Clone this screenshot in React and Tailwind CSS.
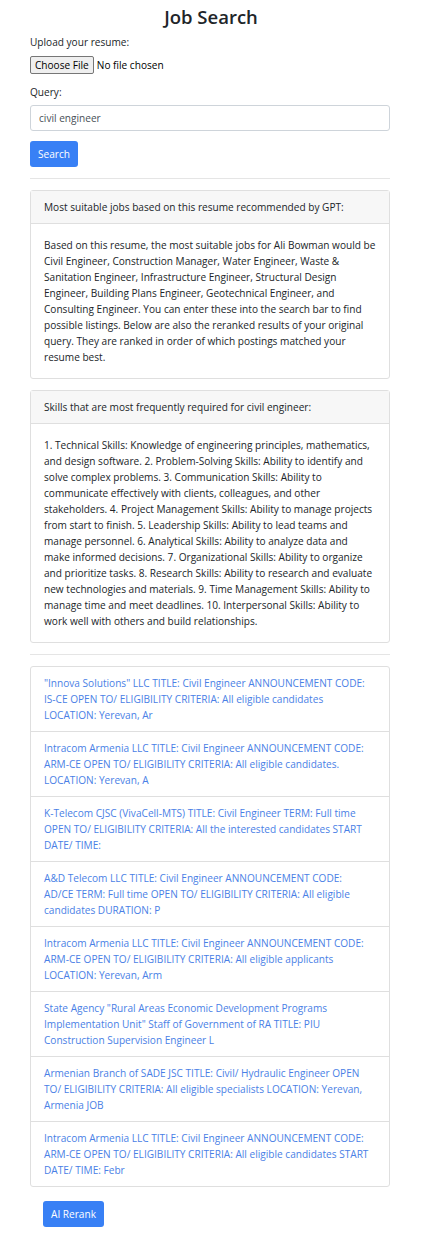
import React from 'react';

const JOBS = [
  '"Innova Solutions" LLC TITLE: Civil Engineer ANNOUNCEMENT CODE: IS-CE OPEN TO/ ELIGIBILITY CRITERIA: All eligible candidates LOCATION: Yerevan, Ar',
  'Intracom Armenia LLC TITLE: Civil Engineer ANNOUNCEMENT CODE: ARM-CE OPEN TO/ ELIGIBILITY CRITERIA: All eligible candidates. LOCATION: Yerevan, A',
  'K-Telecom CJSC (VivaCell-MTS) TITLE: Civil Engineer TERM: Full time OPEN TO/ ELIGIBILITY CRITERIA: All the interested candidates START DATE/ TIME:',
  'A&D Telecom LLC TITLE: Civil Engineer ANNOUNCEMENT CODE:\nAD/CE TERM: Full time OPEN TO/ ELIGIBILITY CRITERIA: All eligible candidates DURATION: P',
  'Intracom Armenia LLC TITLE: Civil Engineer ANNOUNCEMENT CODE: ARM-CE OPEN TO/ ELIGIBILITY CRITERIA: All eligible applicants LOCATION: Yerevan, Arm',
  'State Agency "Rural Areas Economic Development Programs Implementation Unit" Staff of Government of RA TITLE: PIU Construction Supervision Engineer L',
  'Armenian Branch of SADE JSC TITLE: Civil/ Hydraulic Engineer OPEN TO/ ELIGIBILITY CRITERIA: All eligible specialists LOCATION: Yerevan, Armenia JOB',
  'Intracom Armenia LLC TITLE: Civil Engineer ANNOUNCEMENT CODE: ARM-CE OPEN TO/ ELIGIBILITY CRITERIA: All eligible candidates START DATE/ TIME: Febr',
];

const RECOMMEND =
  'Based on this resume, the most suitable jobs for Ali Bowman would be Civil Engineer, Construction Manager, Water Engineer, Waste & Sanitation Engineer, Infrastructure Engineer, Structural Design Engineer, Building Plans Engineer, Geotechnical Engineer, and Consulting Engineer. You can enter these into the search bar to find possible listings. Below are also the reranked results of your original query. They are ranked in order of which postings matched your resume best.';

const SKILLS =
  '1. Technical Skills: Knowledge of engineering principles, mathematics, and design software. 2. Problem-Solving Skills: Ability to identify and solve complex problems. 3. Communication Skills: Ability to communicate effectively with clients, colleagues, and other stakeholders. 4. Project Management Skills: Ability to manage projects from start to finish. 5. Leadership Skills: Ability to lead teams and manage personnel. 6. Analytical Skills: Ability to analyze data and make informed decisions. 7. Organizational Skills: Ability to organize and prioritize tasks. 8. Research Skills: Ability to research and evaluate new technologies and materials. 9. Time Management Skills: Ability to manage time and meet deadlines. 10. Interpersonal Skills: Ability to work well with others and build relationships.';

const InfoCard = ({ title, children }) => (
  <div className="rounded-[3px] border border-[#dfdfdf] bg-white">
    <div className="h-[33px] flex items-center px-[13px] bg-[#f7f7f7] border-b border-[#dfdfdf]">{title}</div>
    <div className="px-[13px] pt-[13px] pb-[13px]">{children}</div>
  </div>
);

export default function App() {
  return (
    <div className="min-h-[1243px] bg-white text-[#212529] text-[10.1px] leading-[16px] font-['Open_Sans','Noto_Sans',sans-serif]">
      <div className="w-[360px] mx-[30px]">
        <h1 className="text-[18.5px] leading-[24px] font-semibold text-center pt-[5px] pl-[2px]">Job Search</h1>

        <div className="mt-[5px]">Upload your resume:</div>
        <div className="flex items-center mt-[6px] h-[18px]">
          <button className="h-[18px] px-[4px] border border-[#767676] bg-[#efefef] rounded-[2px] text-[10.1px] leading-[14px] text-black">Choose File</button>
          <span className="ml-[3px] text-black">No file chosen</span>
        </div>

        <div className="mt-[10px]">Query:</div>
        <input
          readOnly
          value="civil engineer"
          className="mt-[5px] w-full h-[26px] px-[8px] border border-[#ced4da] rounded-[3px] text-[10.1px] text-[#495057] outline-none"
        />
        <button className="mt-[10px] h-[26px] px-[8px] bg-[#3880f5] text-white rounded-[3px] text-[10.1px]">Search</button>

        <hr className="mt-[11px] border-t border-[#e5e5e5]" />

        <div className="mt-[11px]">
          <InfoCard title="Most suitable jobs based on this resume recommended by GPT:">
            <p>{RECOMMEND}</p>
          </InfoCard>
        </div>

        <div className="mt-[11px]">
          <InfoCard title="Skills that are most frequently required for civil engineer:">
            <p>{SKILLS}</p>
          </InfoCard>
        </div>

        <hr className="mt-[11px] border-t border-[#e5e5e5]" />

        <ul className="mt-[11px] rounded-[3px] border border-[#dfdfdf]">
          {JOBS.map((job, i) => (
            <li key={i} className={`px-[13px] py-[8px] whitespace-pre-line ${i > 0 ? 'border-t border-[#dfdfdf]' : ''}`}>
              <a href="#" className="text-[#4a7fe6]">{job}</a>
            </li>
          ))}
        </ul>

        <button className="mt-[14px] ml-[13px] h-[26px] px-[8px] bg-[#3880f5] text-white rounded-[3px] text-[10.1px]">AI Rerank</button>
      </div>
    </div>
  );
}
